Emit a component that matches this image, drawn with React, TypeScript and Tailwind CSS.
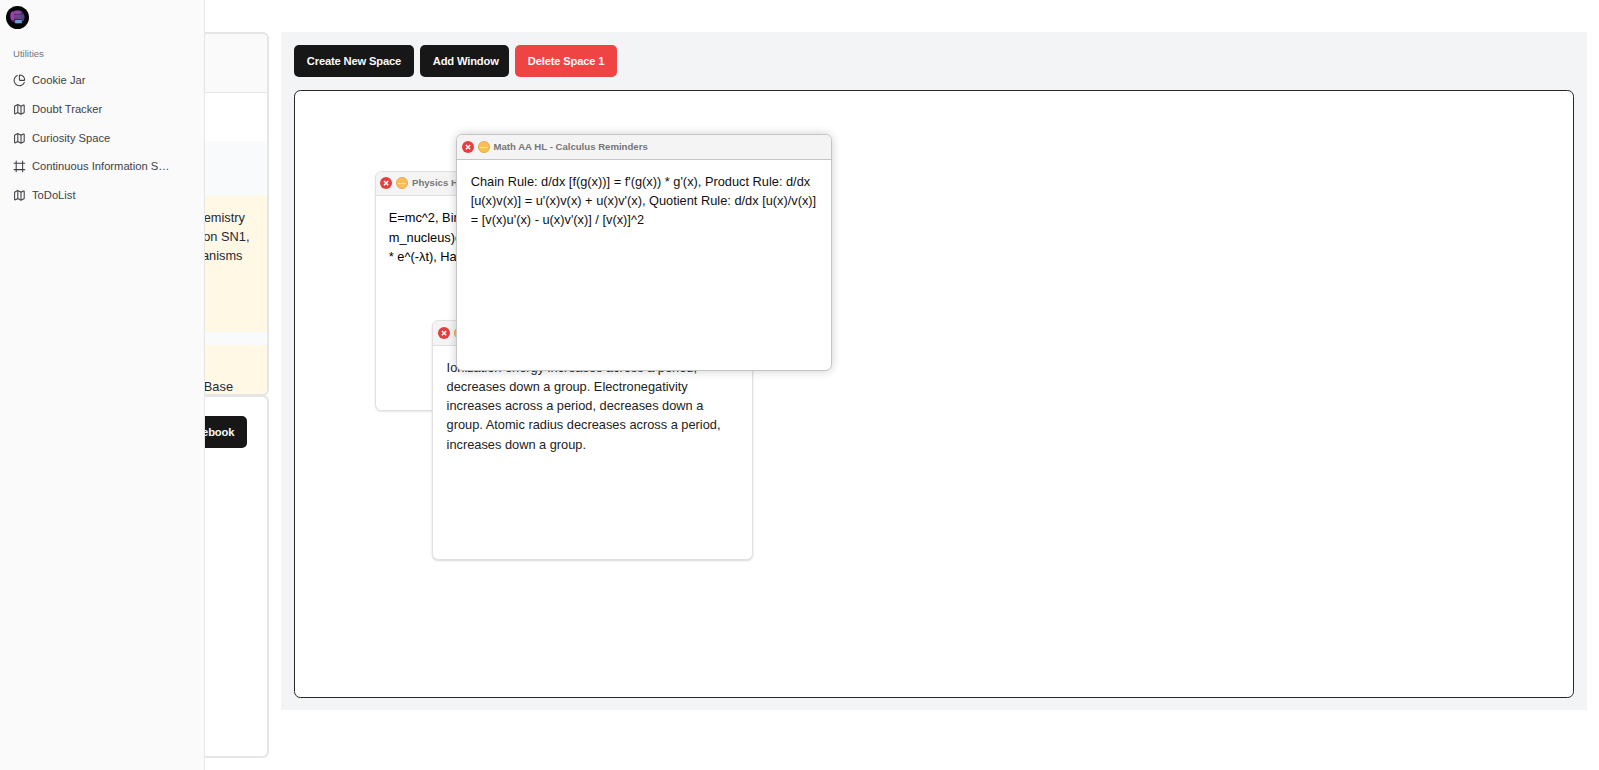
import type { ReactNode } from "react";
import { ChartPie, Frame, Map } from "lucide-react";

const links = [
  { icon: ChartPie, label: "Cookie Jar" },
  { icon: Map, label: "Doubt Tracker" },
  { icon: Map, label: "Curiosity Space" },
  { icon: Frame, label: "Continuous Information S…" },
  { icon: Map, label: "ToDoList" },
];

function Avatar() {
  return (
    <svg viewBox="0 0 24 24" className="size-[23px]">
      <defs>
        <filter id="soft" x="-50%" y="-50%" width="200%" height="200%">
          <feGaussianBlur stdDeviation="0.8" />
        </filter>
      </defs>
      <circle cx="12" cy="12" r="12" fill="#050407" />
      <g filter="url(#soft)">
        <ellipse cx="12" cy="11.3" rx="7.6" ry="7" fill="#44205a" />
        <ellipse cx="6.8" cy="10.4" rx="2.2" ry="4.6" fill="#a03cae" />
        <ellipse cx="12" cy="6.6" rx="4.4" ry="2" fill="#8a4a9e" />
        <rect x="9" y="9" width="8" height="4.4" fill="#6b4a86" />
        <rect x="9.5" y="14.6" width="7" height="3.4" fill="#62a4d8" />
        <ellipse cx="17.6" cy="12" rx="1.4" ry="3.6" fill="#3d4c80" />
      </g>
    </svg>
  );
}

function Sidebar() {
  return (
    <aside className="fixed inset-y-0 left-0 z-50 flex w-[205px] flex-col border-r border-[#e5e5e5] bg-[#fafafa] pt-1.5">
      <div className="pl-1.5">
        <Avatar />
      </div>
      <div className="mt-[19px] pl-[13px] text-[9.6px] leading-[12px] text-[#75757a]">Utilities</div>
      <nav className="mt-[8px] flex flex-col gap-[3px]">
        {links.map(({ icon: Icon, label }) => (
          <a key={label} className="flex h-[25.6px] items-center gap-[6.4px] pl-[12.8px] text-[11.2px] text-[#3f3f46]">
            <Icon className="size-[12.8px] shrink-0" />
            <span>{label}</span>
          </a>
        ))}
      </nav>
    </aside>
  );
}

function LeftColumn() {
  return (
    <div className="flex w-[256px] shrink-0 flex-col">
      <section className="flex h-[364px] flex-col overflow-hidden rounded-[6.4px] border-2 border-[#e5e5e5] text-[12.8px] leading-[19.2px] text-[#1f2937]">
        <div className="h-[59px] shrink-0 border-b border-[#e5e5e5] bg-[#fafafa]" />
        <div className="h-12 shrink-0" />
        <div className="h-[54px] shrink-0 bg-[#f9fafb]" />
        <div className="h-[137px] shrink-0 bg-[#fef8e4] pt-[12.8px] text-right">
          <p className="pr-[22px]">Organic Chemistry</p>
          <p className="pr-[17.5px]">Focus on SN1,</p>
          <p className="pr-[24.5px]">SN2 mechanisms</p>
        </div>
        <div className="h-[13px] shrink-0 bg-[#f9fafb]" />
        <div className="h-[49px] shrink-0 bg-[#fef8e4] pt-[32px] text-right">
          <p className="pr-[34px]">Acid Base</p>
        </div>
      </section>
      <section className="-mt-px flex h-[363px] items-start justify-end rounded-[6.4px] border-2 border-[#e5e5e5] pt-[19px] pr-5">
        <ActionButton className="bg-[#171717] pl-5">Add Notebook</ActionButton>
      </section>
    </div>
  );
}

function ActionButton({ children, className }: { children: ReactNode; className: string }) {
  return (
    <button className={`h-8 rounded-[5px] px-[12.8px] text-[11.2px] font-bold tracking-[-0.17px] whitespace-nowrap text-[#fafafa] ${className}`}>
      {children}
    </button>
  );
}

type NoteProps = { title: string; lines: string[]; place: string; header: string; body: string };

function NoteWindow({ title, lines, place, header, body }: NoteProps) {
  return (
    <article className={`absolute flex flex-col overflow-hidden rounded-[6.4px] border bg-white ${place}`}>
      <header className={`flex shrink-0 items-center border-b border-inherit bg-[#f4f4f4] ${header}`}>
        <svg viewBox="0 0 12 12" className="size-3">
          <circle cx="6" cy="6" r="6" fill="#e53e3e" />
          <path d="M4 4l4.2 4.2M8.2 4L4 8.2" stroke="#fff" strokeWidth="1.5" />
        </svg>
        <svg viewBox="0 0 12 12" className="ml-1 size-3">
          <circle cx="6" cy="6" r="5.6" fill="#fbbd56" stroke="#e5a440" strokeWidth="0.8" />
          <path d="M2 6.5h8" stroke="#fde3b0" strokeWidth="1" />
        </svg>
        <span className="ml-1 text-[9.6px] font-bold whitespace-nowrap text-[#777]">{title}</span>
      </header>
      <div className={`text-[12.8px] leading-[19.2px] whitespace-nowrap ${body}`}>
        {lines.map((line) => (
          <p key={line}>{line}</p>
        ))}
      </div>
    </article>
  );
}

export default function App() {
  return (
    <div className="h-[770px] overflow-hidden bg-white font-['Liberation_Sans',Arial,sans-serif]">
      <Sidebar />
      <main className="flex items-start gap-3 pt-8 pr-3 pl-[13px]">
        <LeftColumn />
        <section className="flex h-[678px] grow flex-col bg-[#f3f4f6] px-[13px] pt-[13px]">
          <div className="flex gap-[6px]">
            <ActionButton className="w-[120px] bg-[#171717]">Create New Space</ActionButton>
            <ActionButton className="w-[89px] bg-[#171717]">Add Window</ActionButton>
            <ActionButton className="w-[102px] bg-[#ef4444]">Delete Space 1</ActionButton>
          </div>
          <div className="relative mt-[13px] h-[608px] shrink-0 overflow-hidden rounded-[6.4px] border border-[#27272a] bg-white">
            <NoteWindow
              title="Physics HL - Formulas"
              lines={["E=mc^2, Binding Energy = (Z*m_p + N*m_n -", "m_nucleus)c^2, N = N0", "* e^(-λt), Half-life = ln(2)/λ"]}
              place="top-[80px] left-[80px] h-[240px] w-[320px] border-[#e0e0e0] shadow-[0_1px_2px_rgba(0,0,0,0.1)]"
              header="h-6 pb-px pl-1"
              body="pt-[12.4px] pl-[12.8px] text-black"
            />
            <NoteWindow
              title="Chemistry HL - Trends"
              lines={[
                "Ionization energy increases across a period,",
                "decreases down a group. Electronegativity",
                "increases across a period, decreases down a",
                "group. Atomic radius decreases across a period,",
                "increases down a group.",
              ]}
              place="top-[229px] left-[137px] h-[240px] w-[321px] border-[#e0e0e0] shadow-[0_1px_2px_rgba(0,0,0,0.15)]"
              header="h-[25px] pl-[4.7px]"
              body="pt-[11.7px] pl-[13.6px] text-[#222]"
            />
            <NoteWindow
              title="Math AA HL - Calculus Reminders"
              lines={[
                "Chain Rule: d/dx [f(g(x))] = f'(g(x)) * g'(x), Product Rule: d/dx",
                "[u(x)v(x)] = u'(x)v(x) + u(x)v'(x), Quotient Rule: d/dx [u(x)/v(x)]",
                "= [v(x)u'(x) - u(x)v'(x)] / [v(x)]^2",
              ]}
              place="top-[43px] left-[161px] h-[237px] w-[376px] border-[#c4c4c4] shadow-[0_0_10px_rgba(0,0,0,0.2)]"
              header="h-[25px] pl-[4.5px]"
              body="pt-3 pl-[13.7px] text-[#111]"
            />
          </div>
        </section>
      </main>
    </div>
  );
}
